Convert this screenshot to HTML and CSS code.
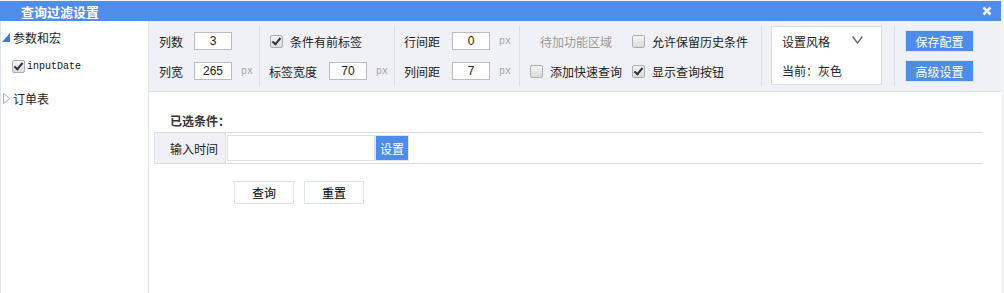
FILE: index.html
```html
<!DOCTYPE html>
<html lang="zh">
  <head>
    <title>查询过滤设置</title>
    <link rel="stylesheet" href="styles.css">
  </head>
  <body>
    <div class="dialog">
      <div class="titlebar">
        <span class="title">查询过滤设置</span>
        <svg class="close" width="10" height="10" viewBox="0 0 10 10"><path d="M1.5 1.5 L8.5 8.5 M8.5 1.5 L1.5 8.5" stroke="#e8f0ff" stroke-width="2.6"/></svg>
      </div>
      <div class="body">
        <div class="tree">
          <div class="node">
            <svg class="arrow" width="8" height="9" viewBox="0 0 8 9"><polygon points="8,0 8,9 0,9" fill="#3a7be0"/></svg>
            <span>参数和宏</span>
          </div>
          <div class="leaf">
            <span class="check on"></span>
            <span class="mono">inputDate</span>
          </div>
          <div class="node closed">
            <svg class="arrow" width="8" height="11" viewBox="0 0 8 11"><polygon points="0.5,0.5 7,5.5 0.5,10.5" fill="none" stroke="#9fa8e0"/></svg>
            <span>订单表</span>
          </div>
        </div>

        <div class="content">
          <div class="toolbar">
            <div class="group g1">
              <div class="row"><label class="w35">列数</label><input class="num" value="3"></div>
              <div class="row"><label class="w35">列宽</label><input class="num" value="265"><span class="px">px</span></div>
            </div>
            <div class="group g2">
              <div class="row"><span class="check on"></span><span class="ctext">条件有前标签</span></div>
              <div class="row"><label class="w60">标签宽度</label><input class="num" value="70"><span class="px">px</span></div>
            </div>
            <div class="group g3">
              <div class="row"><label class="w48">行间距</label><input class="num" value="0"><span class="px">px</span></div>
              <div class="row"><label class="w48">列间距</label><input class="num" value="7"><span class="px">px</span></div>
            </div>
            <div class="group g4">
              <div class="row">
                <span class="col"><span class="muted">待加功能区域</span></span>
                <span class="col"><span class="check"></span><span class="ctext">允许保留历史条件</span></span>
              </div>
              <div class="row">
                <span class="col"><span class="check"></span><span class="ctext">添加快速查询</span></span>
                <span class="col"><span class="check on"></span><span class="ctext">显示查询按钮</span></span>
              </div>
            </div>
            <div class="group g5">
              <div class="style-box">
                <div class="row"><span>设置风格</span><svg class="chev" width="11" height="8" viewBox="0 0 11 8"><polyline points="0.5,0.5 5.5,7 10.5,0.5" fill="none" stroke="#666" stroke-width="1.4"/></svg></div>
                <div class="row">当前：灰色</div>
              </div>
            </div>
            <div class="group g6">
              <div class="row"><button class="blue">保存配置</button></div>
              <div class="row"><button class="blue">高级设置</button></div>
            </div>
          </div>

          <div class="conditions">
            <div class="heading">已选条件：</div>
            <div class="cond-table">
              <div class="cond-label">输入时间</div>
              <div class="cond-field">
                <input class="text">
                <button class="blue set">设置</button>
              </div>
            </div>
            <div class="actions">
              <button class="plain">查询</button>
              <button class="plain">重置</button>
            </div>
          </div>
        </div>
      </div>
    </div>
  </body>
</html>
```

FILE: styles.css
```css
html {
  font-family: "Noto Sans CJK SC", "Liberation Sans", sans-serif;
  font-size: 12px;
  color: #222;
}

body {
  margin: 0;
  background: #f2f3f6;
}

input,
button {
  font-family: "Liberation Sans", "Noto Sans CJK SC", sans-serif;
  font-size: 12px;
  box-sizing: border-box;
}

button {
  font-family: "Noto Sans CJK SC", sans-serif;
  cursor: pointer;
}

.dialog {
  width: 1001px;
  height: 292px;
  margin-top: 1px;
  background: #fff;
  display: flex;
  flex-flow: column;
}

.titlebar {
  height: 20px;
  background: #4f8dea;
  display: flex;
  align-items: center;
  justify-content: space-between;
  color: #fff;
}

.title {
  margin-left: 21px;
  font-size: 13px;
  font-weight: bold;
}

.close {
  margin-right: 9px;
}

.body {
  flex: 1;
  display: flex;
  flex-flow: row;
}

/* left tree */
.tree {
  width: 147px;
  border-left: 1px solid #dde3ec;
  border-right: 1px solid #dde3ec;
  padding-top: 8px;
}

.node,
.leaf {
  display: flex;
  align-items: center;
  height: 16px;
  font-size: 12px;
}

.node .arrow {
  margin: 0 3px 0 1px;
}

.leaf {
  margin-top: 14px;
  padding-left: 11px;
  height: 14px;
}

.node.closed {
  margin-top: 17px;
}

.node.closed .arrow {
  margin-left: 2px;
  margin-right: 2px;
}

.mono {
  font-family: "Liberation Mono", monospace;
  font-size: 10px;
  margin-left: 2px;
  color: #111;
}

/* checkboxes */
.check {
  display: inline-block;
  width: 11px;
  height: 11px;
  border: 1px solid #a9adb4;
  border-radius: 2px;
  background: linear-gradient(#f4f4f4, #dcdcdc);
  position: relative;
  flex: none;
}

.check.on::after {
  content: "";
  position: absolute;
  left: 3px;
  top: 0;
  width: 3px;
  height: 7px;
  border-right: 2px solid #333;
  border-bottom: 2px solid #333;
  transform: rotate(40deg);
}

/* toolbar */
.content {
  flex: 1;
  display: flex;
  flex-flow: column;
}

.toolbar {
  height: 70px;
  background: #eff1f6;
  border-bottom: 1px solid #dfe3ea;
  display: flex;
  flex-flow: row;
  align-items: center;
}

.group {
  height: 60px;
  border-right: 1px solid #dcdfe6;
  display: flex;
  flex-flow: column;
  box-sizing: border-box;
}

.group .row {
  height: 30px;
  display: flex;
  align-items: center;
}

.g1 { width: 111px; padding-left: 10px; }
.g2 { width: 135px; padding-left: 9px; }
.g3 { width: 125px; padding-left: 9px; }
.g4 { width: 242px; padding-left: 10px; }
.g5 { width: 133px; padding-left: 9px; }
.g6 { border-right: none; padding-left: 10px; }

.g2 .row:first-child { padding-left: 1px; }

label {
  display: inline-block;
}

.w35 { width: 35px; }
.w60 { width: 60px; }
.w48 { width: 48px; }

.num {
  width: 38px;
  height: 18px;
  border: 1px solid #b9bcc2;
  text-align: center;
  padding: 0;
  color: #222;
}

.px {
  margin-left: 9px;
  font-family: "Liberation Mono", monospace;
  font-size: 10px;
  color: #a3a3a3;
}

.ctext {
  margin-left: 7px;
}

.col {
  width: 102px;
  display: flex;
  align-items: center;
  white-space: nowrap;
}

.muted {
  margin-left: 10px;
  color: #9a9a9a;
}

.style-box {
  width: 111px;
  height: 59px;
  background: #fff;
  border: 1px solid #dcdfe6;
  box-sizing: border-box;
  padding-left: 10px;
}

.style-box .row {
  height: 29px;
}

.chev {
  margin-left: 22px;
  margin-top: -4px;
}

button.blue {
  background: #4e8ce9;
  color: #fff;
  border: 1px solid #dbe5f5;
}

.g6 button {
  width: 69px;
  height: 22px;
  padding: 0;
}

/* selected conditions */
.conditions {
  padding-top: 20px;
}

.heading {
  margin-left: 21px;
  font-weight: bold;
  color: #333;
  height: 20px;
}

.cond-table {
  margin: 0 19px 0 5px;
  border-top: 1px solid #dcdcdc;
  border-bottom: 1px solid #dcdcdc;
  display: flex;
  flex-flow: row;
  height: 30px;
}

.cond-label {
  width: 72px;
  background: #eff1f6;
  border-left: 1px solid #dcdfe6;
  border-right: 1px solid #dcdfe6;
  box-sizing: border-box;
  padding-left: 15px;
  display: flex;
  align-items: center;
}

.cond-field {
  display: flex;
  align-items: center;
  padding-left: 1px;
}

.text {
  width: 148px;
  height: 26px;
  border: 1px solid #dcdfe6;
}

.set {
  width: 34px;
  height: 26px;
  padding: 0;
}

.actions {
  display: flex;
  gap: 10px;
  margin-top: 17px;
  margin-left: 85px;
}

button.plain {
  width: 60px;
  height: 23px;
  background: #fff;
  border: 1px solid #dde3ea;
  color: #000;
  padding: 0;
}
```
